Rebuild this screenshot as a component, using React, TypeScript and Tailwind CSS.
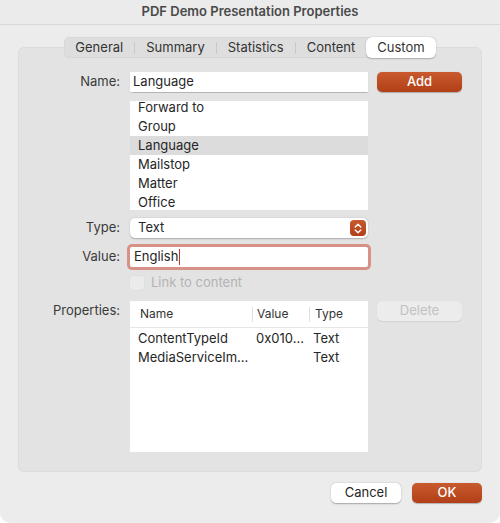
import { useState } from 'react';

const TABS = ['General', 'Summary', 'Statistics', 'Content', 'Custom'];

const NAMES = ['Forward to', 'Group', 'Language', 'Mailstop', 'Matter', 'Office'];

const PROPS = [
  { name: 'ContentTypeId', value: '0x010...', type: 'Text' },
  { name: 'MediaServiceIm...', value: '', type: 'Text' },
];

const ORANGE = 'bg-gradient-to-b from-[#c85a2e] to-[#b23f17]';

const Label = ({ children, top }: { children: string; top?: boolean }) => (
  <div
    className={`w-[102px] shrink-0 pr-[1px] text-right text-[13px] text-[#3a3a3a] ${top ? 'self-start' : ''}`}
  >
    {children}
  </div>
);

export default function App() {
  const [active] = useState('Custom');

  return (
    <div
      className="flex h-[523px] w-[500px] flex-col overflow-hidden rounded-b-[10px] bg-[#ececec] text-[#262626]"
      style={{ fontFamily: 'Inter, "Liberation Sans", sans-serif' }}
    >
      {/* Title bar */}
      <div className="flex h-[25px] shrink-0 items-center justify-center border-b border-[#d8d8d8] bg-[#ebebeb] text-[13px] font-semibold text-[#4a4a4a]">
        PDF Demo Presentation Properties
      </div>

      <div className="flex flex-col px-[18px] pt-[22px]">
        {/* Group box */}
        <div className="flex h-[425px] flex-col rounded-[6px] border border-[#dcdcdc] bg-[#e3e3e3]">
          {/* Tabs */}
          <div className="-mt-[11px] flex justify-center">
            <div className="flex h-[21px] items-center rounded-[6px] bg-[#dedede] shadow-[inset_0_0_0_0.5px_#d0d0d0] text-[13px] text-[#333]">
              {TABS.map((t, i) => {
                const sel = t === active;
                const nextSel = TABS[i + 1] === active;
                return (
                  <div key={t} className="flex h-full items-center">
                    <div
                      className={`flex h-full items-center rounded-[6px] px-[11px] ${
                        sel ? 'bg-white shadow-[0_0.5px_1.5px_rgba(0,0,0,0.25)]' : ''
                      }`}
                    >
                      {t}
                    </div>
                    {i < TABS.length - 1 && !sel && !nextSel && (
                      <div className="h-[12px] w-px bg-[#c8c8c8]" />
                    )}
                  </div>
                );
              })}
            </div>
          </div>

          {/* Name */}
          <div className="mt-[14px] flex items-center gap-[9px]">
            <Label>Name:</Label>
            <div className="flex h-[20px] w-[238px] items-center bg-white pl-[3px] text-[13px] shadow-[0_0.5px_1px_rgba(0,0,0,0.2)]">
              Language
            </div>
            <button
              className={`h-[20px] w-[85px] rounded-[5px] ${ORANGE} text-[13px] font-medium text-white shadow-[0_0.5px_1px_rgba(0,0,0,0.25)]`}
            >
              Add
            </button>
          </div>

          {/* Name list */}
          <div className="mt-[9px] flex gap-[9px]">
            <div className="w-[102px] shrink-0" />
            <div className="h-[109px] w-[238px] overflow-hidden bg-white text-[13px]">
              <div className="-mt-[3px]">
                {NAMES.map((n) => (
                  <div
                    key={n}
                    className={`flex h-[19px] items-center pl-[8px] ${n === 'Language' ? 'bg-[#dcdcdc]' : ''}`}
                  >
                    {n}
                  </div>
                ))}
              </div>
            </div>
          </div>

          {/* Type */}
          <div className="mt-[8px] flex items-center gap-[9px]">
            <Label>Type:</Label>
            <div className="flex h-[20px] w-[238px] items-center justify-between rounded-[5px] bg-white pl-[8px] pr-[2px] text-[13px] shadow-[0_0.5px_1.5px_rgba(0,0,0,0.25)]">
              <span>Text</span>
              <div className={`flex h-[16px] w-[16px] items-center justify-center rounded-[4px] ${ORANGE}`}>
                <svg width="8" height="11" viewBox="0 0 8 11" fill="none">
                  <path d="M1.2 4 L4 1.3 L6.8 4" stroke="white" strokeWidth="1.4" strokeLinecap="round" strokeLinejoin="round" />
                  <path d="M1.2 7 L4 9.7 L6.8 7" stroke="white" strokeWidth="1.4" strokeLinecap="round" strokeLinejoin="round" />
                </svg>
              </div>
            </div>
          </div>

          {/* Value */}
          <div className="mt-[9px] flex items-center gap-[9px]">
            <Label>Value:</Label>
            <div className="flex h-[20px] w-[238px] items-center rounded-[2px] bg-white pl-[4px] text-[13px] ring-[3px] ring-[#d79287]">
              English
              <span className="ml-[1px] h-[16px] w-px bg-[#c0391b]" />
            </div>
          </div>

          {/* Link to content */}
          <div className="mt-[9px] flex items-center gap-[9px]">
            <div className="w-[102px] shrink-0" />
            <div className="flex h-[14px] items-center gap-[7px]">
              <div className="h-[14px] w-[14px] rounded-[3px] bg-[#ebebeb] shadow-[0_0_0_0.5px_#dcdcdc]" />
              <span className="text-[13px] text-[#b3b3b3]">Link to content</span>
            </div>
          </div>

          {/* Properties */}
          <div className="mt-[11px] flex gap-[9px]">
            <Label top>Properties:</Label>
            <div className="h-[151px] w-[238px] bg-white text-[13px]">
              <div className="flex h-[27px] items-center border-b border-[#e6e6e6] text-[12px] text-[#333]">
                <div className="w-[122px] pl-[10px]">Name</div>
                <div className="h-[15px] w-px bg-[#e0e0e0]" />
                <div className="w-[56px] pl-[4px]">Value</div>
                <div className="h-[15px] w-px bg-[#e0e0e0]" />
                <div className="pl-[5px]">Type</div>
              </div>
              <div className="pt-[1px]">
                {PROPS.map((p) => (
                  <div key={p.name} className="flex h-[19px] items-center whitespace-nowrap">
                    <div className="w-[118px] pl-[8px]">{p.name}</div>
                    <div className="w-[65px] pl-[8px]">{p.value}</div>
                    <div>{p.type}</div>
                  </div>
                ))}
              </div>
            </div>
            <button className="h-[20px] w-[85px] rounded-[5px] bg-[#ececec] text-[13px] text-[#c2c2c2] shadow-[0_0.5px_1px_rgba(0,0,0,0.08)]">
              Delete
            </button>
          </div>
        </div>

        {/* Bottom buttons */}
        <div className="mt-[11px] flex justify-end gap-[11px]">
          <button className="h-[20px] w-[70px] rounded-[5px] bg-white text-[13px] text-[#262626] shadow-[0_0.5px_1.5px_rgba(0,0,0,0.3)]">
            Cancel
          </button>
          <button
            className={`h-[20px] w-[70px] rounded-[5px] ${ORANGE} text-[13px] font-medium text-white shadow-[0_0.5px_1px_rgba(0,0,0,0.25)]`}
          >
            OK
          </button>
        </div>
      </div>
    </div>
  );
}
